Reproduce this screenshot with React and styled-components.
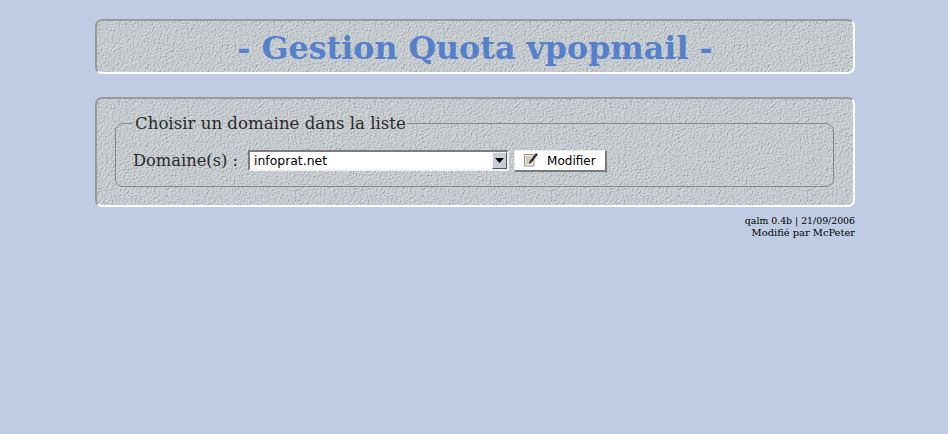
import React from "react";
import styled, { createGlobalStyle } from "styled-components";

const grain = encodeURIComponent(
	`<svg xmlns="http://www.w3.org/2000/svg" width="256" height="256"><filter id="g" x="0" y="0" width="100%" height="100%"><feTurbulence type="fractalNoise" baseFrequency="0.85" numOctaves="2" seed="7" stitchTiles="stitch"/><feColorMatrix type="saturate" values="0"/><feDiffuseLighting surfaceScale="1.8" lighting-color="#cbd0d4" diffuseConstant="1.12"><feDistantLight azimuth="225" elevation="58"/></feDiffuseLighting></filter><rect width="256" height="256" filter="url(#g)"/></svg>`
);

const GlobalStyle = createGlobalStyle`
	html, body {
		margin: 0;
		padding: 0;
		background: #bfcce3;
	}
`;

const Page = styled.div`
	box-sizing: border-box;
	width: 948px;
	height: 434px;
	padding: 19px 93px 0 95px;
	font-family: "DejaVu Serif", serif;
`;

const Panel = styled.div`
	box-sizing: border-box;
	height: ${({ height }) => height}px;
	margin-bottom: ${({ gap }) => gap || 0}px;
	background: #c6cbcf url("data:image/svg+xml,${grain}");
	border-style: solid;
	border-width: 2px;
	border-color: #9a9a9a #ffffff #ffffff #9a9a9a;
	border-radius: 7px;
`;

const Title = styled.h1`
	margin: 0;
	padding-top: 6px;
	font-size: 31.7px;
	line-height: 42px;
	font-weight: bold;
	text-align: center;
	color: #5580cc;
`;

const Fieldset = styled.fieldset`
	box-sizing: border-box;
	height: 73px;
	margin: 15px 19px 0 18px;
	padding: 17px 0 0 17px;
	border: 1px solid #85898d;
	border-radius: 8px;
`;

const Legend = styled.legend`
	padding: 0 1px 0 2px;
	margin-left: 0;
	font-size: 16.6px;
	line-height: 19px;
	color: #2a2a2a;
`;

const Row = styled.div`
	display: flex;
	align-items: flex-start;
`;

const Label = styled.label`
	font-size: 16.3px;
	line-height: 21px;
	color: #2a2a2a;
	margin-right: 10px;
`;

const SelectWrap = styled.div`
	position: relative;
	width: 261px;
	height: 21px;
	margin-right: 5px;
`;

const Select = styled.select`
	appearance: none;
	box-sizing: border-box;
	display: block;
	width: 100%;
	height: 100%;
	padding: 0 0 0 4px;
	font-family: "DejaVu Sans", sans-serif;
	font-size: 12.4px;
	color: #000000;
	background: #ffffff;
	border-style: solid;
	border-width: 2px;
	border-color: #7d7d7d #f2f2f2 #f2f2f2 #7d7d7d;
	border-radius: 0;
`;

const Arrow = styled.span`
	position: absolute;
	top: 2px;
	right: 2px;
	box-sizing: border-box;
	width: 15px;
	height: 17px;
	display: flex;
	align-items: center;
	justify-content: center;
	background: #c6ccd8;
	border-style: solid;
	border-width: 1px;
	border-color: #f4f4f4 #555555 #555555 #f4f4f4;
	pointer-events: none;
	svg {
		display: block;
	}
`;

const Button = styled.button`
	box-sizing: border-box;
	display: flex;
	align-items: center;
	width: 93px;
	height: 22px;
	padding: 1px 0 0 8px;
	font-family: "DejaVu Sans", sans-serif;
	font-size: 12px;
	color: #000000;
	background: #ffffff;
	border-style: solid;
	border-width: 1px 2px 2px 1px;
	border-color: #e8e8e8 #7a7a7a #7a7a7a #e8e8e8;
	svg {
		margin-right: 8px;
		margin-top: -4px;
	}
`;

const Footer = styled.div`
	margin-top: 8px;
	line-height: 12px;
	text-align: right;
	color: #000000;
`;

const FooterLine = styled.div`
	font-size: ${({ size }) => size}px;
`;

const NoteIcon = () => (
	<svg width="16" height="15" viewBox="0 0 16 15">
		<path d="M1.5 2.5h9.5v11.5h-9.5z" fill="#efe9d8" stroke="#9a9484" />
		<path d="M3 5h6M3 7h4M3 9h3M3 11h6" stroke="#b5ae9a" />
		<path d="M6 11.5l1-3 6-7.5 2 1.5-6 7.5z" fill="#333333" />
		<path d="M6 11.5l.5-1.5 1.2.9z" fill="#000000" />
	</svg>
);

const ArrowGlyph = () => (
	<svg width="9" height="5" viewBox="0 0 9 5">
		<path d="M0 0h9L4.5 5z" fill="#000000" />
	</svg>
);

export default function App() {
	return (
		<>
			<GlobalStyle />
			<Page>
				<Panel height={55} gap={23}>
					<Title>- Gestion Quota vpopmail -</Title>
				</Panel>
				<Panel height={110}>
					<Fieldset>
						<Legend>Choisir un domaine dans la liste</Legend>
						<Row>
							<Label htmlFor="domaine">Domaine(s) :</Label>
							<SelectWrap>
								<Select id="domaine" defaultValue="infoprat.net">
									<option>infoprat.net</option>
								</Select>
								<Arrow>
									<ArrowGlyph />
								</Arrow>
							</SelectWrap>
							<Button type="button">
								<NoteIcon />
								Modifier
							</Button>
						</Row>
					</Fieldset>
				</Panel>
				<Footer>
					<FooterLine size={9.35}>qalm 0.4b | 21/09/2006</FooterLine>
					<FooterLine size={9.9}>Modifié par McPeter</FooterLine>
				</Footer>
			</Page>
		</>
	);
}
